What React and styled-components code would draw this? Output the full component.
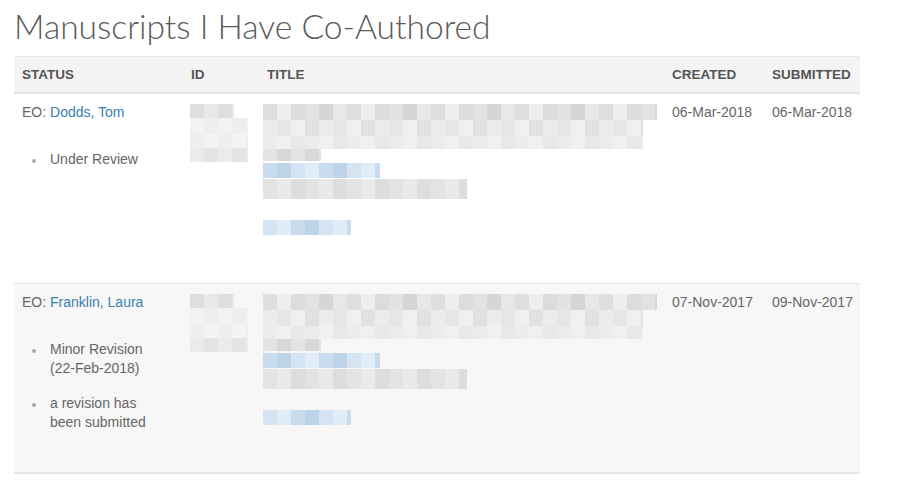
import React from "react";
import styled, { createGlobalStyle } from "styled-components";

const GlobalStyle = createGlobalStyle`
  body {
    margin: 0;
    background: #fff;
    font-family: "Liberation Sans", Arial, sans-serif;
    color: #555;
  }
`;

const grey = ["#dcdcdc", "#e2e2e2", "#d6d6d6", "#e8e8e8", "#dfdfdf", "#eeeeee"];
const blue = ["#d4e4f2", "#bcd3e8", "#c9dcee", "#e0ecf6"];

// fake "pixelated" blocks standing in for the blurred content
const makeCells = (total, size, palette, seed) => {
  const cells = [];
  let w = 0;
  let i = seed;
  while (w < total) {
    const cw = Math.min(size, total - w);
    cells.push({ w: cw, c: palette[(i * 7 + 3) % palette.length] });
    w += cw;
    i++;
  }
  return cells;
};

const rows = [
  {
    status: "Dodds, Tom",
    notes: ["Under Review"],
    created: "06-Mar-2018",
    submitted: "06-Mar-2018",
  },
  {
    status: "Franklin, Laura",
    notes: ["Minor Revision (22-Feb-2018)", "a revision has been submitted"],
    created: "07-Nov-2017",
    submitted: "09-Nov-2017",
  },
];

const titleLines = [
  { w: 394, h: 16, p: grey, s: 14, seed: 1 },
  { w: 380, h: 16, p: ["#e6e6e6", "#ececec", "#e1e1e1", "#f0f0f0"], s: 14, seed: 2 },
  { w: 380, h: 13, p: ["#ececec", "#f0f0f0", "#e8e8e8"], s: 14, seed: 3 },
  { w: 58, h: 12, p: ["#d8d8d8", "#e4e4e4"], s: 14, seed: 4 },
  { w: 117, h: 15, p: blue, s: 14, seed: 5, gap: 2 },
  { w: 204, h: 20, p: ["#e3e3e3", "#eaeaea", "#dddddd"], s: 14, seed: 6, gap: 1 },
  { w: 88, h: 15, p: blue, s: 14, seed: 7, gap: 21 },
];

const idLines = [
  { w: 44, h: 14, p: ["#dedede", "#e8e8e8"], s: 14, seed: 1 },
  { w: 58, h: 16, p: ["#eeeeee", "#f2f2f2"], s: 14, seed: 2 },
  { w: 58, h: 14, p: ["#efefef", "#f3f3f3"], s: 14, seed: 3 },
  { w: 58, h: 14, p: ["#e4e4e4", "#ebebeb"], s: 14, seed: 4 },
];

const Mosaic = ({ lines, shift }) => (
  <MosaicBox $shift={shift}>
    {lines.map((l, i) => (
      <MosaicRow key={i} $h={l.h} $gap={l.gap || 0}>
        {makeCells(l.w, l.s, l.p, l.seed).map((c, j) => (
          <Cell key={j} style={{ width: c.w, background: c.c }} />
        ))}
      </MosaicRow>
    ))}
  </MosaicBox>
);

const App = () => {
  return (
    <>
      <GlobalStyle />
      <Page>
        <Heading>Manuscripts I Have Co-Authored</Heading>
        <Table>
          <thead>
            <tr>
              <Th $w={153}>STATUS</Th>
              <Th $w={60}>ID</Th>
              <Th>TITLE</Th>
              <Th $w={84}>CREATED</Th>
              <Th $w={80}>SUBMITTED</Th>
            </tr>
          </thead>
          <tbody>
            {rows.map((r, i) => (
              <Row key={i} $alt={i % 2 === 1}>
                <Td>
                  <Editor>
                    EO: <NameLink href="#">{r.status}</NameLink>
                  </Editor>
                  <Notes>
                    {r.notes.map((n) => (
                      <Note key={n}>{n}</Note>
                    ))}
                  </Notes>
                </Td>
                <Td>
                  <Mosaic lines={idLines} shift={-1} />
                </Td>
                <Td>
                  <Mosaic lines={titleLines} shift={-4} />
                </Td>
                <DateTd>{r.created}</DateTd>
                <DateTd>{r.submitted}</DateTd>
              </Row>
            ))}
          </tbody>
        </Table>
      </Page>
    </>
  );
};

export default App;

const Page = styled.div`
  padding: 0 40px 0 14px;
`;

const Heading = styled.h1`
  font-family: Lato, "Open Sans", sans-serif;
  font-weight: 300;
  font-size: 33.6px;
  color: #5a5a5a;
  margin: 0;
  padding-top: 6px;
  height: 50px;
`;

const Table = styled.table`
  width: 846px;
  border-collapse: collapse;
  table-layout: fixed;
  font-size: 14px;
`;

const Th = styled.th`
  width: ${(p) => (p.$w ? `${p.$w}px` : "auto")};
  text-align: left;
  font-size: 13.5px;
  font-weight: bold;
  color: #555;
  background: #f4f4f4;
  height: 35px;
  padding: 0 8px;
  border-top: 1px solid #e8e8e8;
  border-bottom: 2px solid #e6e6e6;
  white-space: nowrap;
`;

const Row = styled.tr`
  background: ${(p) => (p.$alt ? "#f7f7f7" : "#fff")};
  border-bottom: ${(p) => (p.$alt ? "2px solid #e6e6e6" : "1px solid #e2e2e2")};
  height: 190px;
`;

const Td = styled.td`
  vertical-align: top;
  padding: 9px 8px;
  color: #666;
  line-height: 19px;
`;

const DateTd = styled(Td)`
  white-space: nowrap;
`;

const Editor = styled.div`
  color: #666;
`;

const NameLink = styled.a`
  color: #3a7fb0;
  text-decoration: none;
`;

const Notes = styled.ul`
  list-style: none;
  margin: 28px 0 0;
  padding: 0 0 0 28px;
`;

const Note = styled.li`
  position: relative;
  max-width: 110px;
  margin-bottom: 16px;

  &::before {
    content: "";
    position: absolute;
    left: -18px;
    top: 9px;
    width: 4px;
    height: 4px;
    border-radius: 50%;
    background: #aaa;
  }
`;

const MosaicBox = styled.div`
  display: flex;
  flex-direction: column;
  align-items: flex-start;
  padding-top: 1px;
  margin-left: ${(p) => p.$shift || 0}px;
  filter: blur(0.6px);
`;

const MosaicRow = styled.div`
  display: flex;
  height: ${(p) => p.$h}px;
  margin-top: ${(p) => p.$gap}px;
`;

const Cell = styled.div`
  height: 100%;
`;
